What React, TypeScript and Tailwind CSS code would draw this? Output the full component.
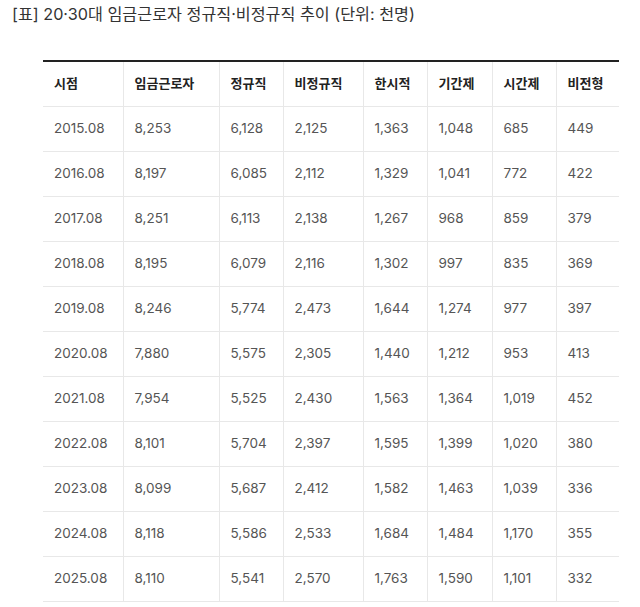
import React from "react";

const headers = ["시점", "임금근로자", "정규직", "비정규직", "한시적", "기간제", "시간제", "비전형"];
const widths = ["w-[80px]", "w-[96px]", "w-[64px]", "w-[80px]", "w-[64px]", "w-[65px]", "w-[64px]", "w-[63px]"];

const rows: string[][] = [
  ["2015.08", "8,253", "6,128", "2,125", "1,363", "1,048", "685", "449"],
  ["2016.08", "8,197", "6,085", "2,112", "1,329", "1,041", "772", "422"],
  ["2017.08", "8,251", "6,113", "2,138", "1,267", "968", "859", "379"],
  ["2018.08", "8,195", "6,079", "2,116", "1,302", "997", "835", "369"],
  ["2019.08", "8,246", "5,774", "2,473", "1,644", "1,274", "977", "397"],
  ["2020.08", "7,880", "5,575", "2,305", "1,440", "1,212", "953", "413"],
  ["2021.08", "7,954", "5,525", "2,430", "1,563", "1,364", "1,019", "452"],
  ["2022.08", "8,101", "5,704", "2,397", "1,595", "1,399", "1,020", "380"],
  ["2023.08", "8,099", "5,687", "2,412", "1,582", "1,463", "1,039", "336"],
  ["2024.08", "8,118", "5,586", "2,533", "1,684", "1,484", "1,170", "355"],
  ["2025.08", "8,110", "5,541", "2,570", "1,763", "1,590", "1,101", "332"],
];

const App: React.FC = () => {
  return (
    <div className="bg-white w-[640px] h-[607px] font-['Inter','Noto_Sans_CJK_KR',sans-serif]">
      <h2 className="pl-[12px] pt-[2px] h-[60px] text-[16.2px] leading-[24px] text-[#333] font-normal">
        [표] 20·30대 임금근로자 정규직·비정규직 추이 (단위: 천명)
      </h2>
      <table className="ml-[43px] w-[576px] table-fixed border-collapse border-t-2 border-[#222]">
        <colgroup>
          {widths.map((w, i) => (
            <col key={i} className={w} />
          ))}
        </colgroup>
        <thead>
          <tr className="h-[45px] border-b border-[#e8e8e8]">
            {headers.map((h, i) => (
              <th
                key={h}
                className={`text-left pl-[11px] text-[13px] font-semibold text-[#222] ${i > 0 ? "border-l border-[#e8e8e8]" : ""}`}
              >
                {h}
              </th>
            ))}
          </tr>
        </thead>
        <tbody>
          {rows.map((r) => (
            <tr key={r[0]} className="h-[45px] border-b border-[#e8e8e8]">
              {r.map((c, i) => (
                <td
                  key={i}
                  className={`pl-[11px] text-[13.5px] text-[#555] ${i > 0 ? "border-l border-[#e8e8e8]" : ""}`}
                >
                  {c}
                </td>
              ))}
            </tr>
          ))}
        </tbody>
      </table>
    </div>
  );
};

export default App;
